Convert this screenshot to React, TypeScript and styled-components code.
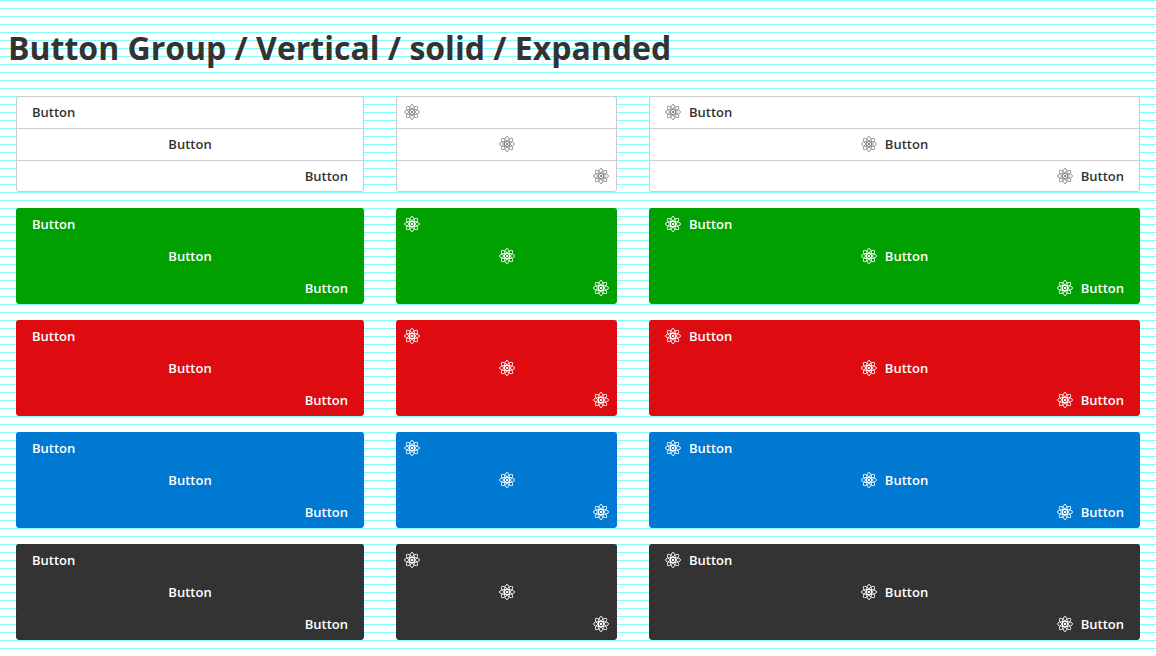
import React from "react";
import styled, { createGlobalStyle } from "styled-components";

const GlobalStyle = createGlobalStyle`
  *, *::before, *::after { box-sizing: border-box; }
  body {
    margin: 0;
    color: #333;
    font-family: "Open Sans", "Noto Sans", sans-serif;
    background: #fff linear-gradient(#80ffff 1px, transparent 1px) 0 0 / 8px 8px;
  }
`;

const Page = styled.main`
  min-height: 100vh;
`;

const Title = styled.h1`
  margin: 0;
  padding: 24px 8px;
  font-size: 32px;
  line-height: 48px;
  font-weight: 700;
`;

const Grid = styled.div`
  display: grid;
  grid-template-columns: 348fr 221fr 491fr;
  gap: 16px 32px;
  padding: 0 16px 16px;
`;

type Tone = "default" | "success" | "danger" | "info" | "dark";
type Align = "flex-start" | "center" | "flex-end";

const fills: Record<Tone, string> = {
  default: "#fff",
  success: "#00a000",
  danger: "#de0b11",
  info: "#0079d3",
  dark: "#333",
};

const borderColor = (tone: Tone) => (tone === "default" ? "#ccc" : fills[tone]);

const Group = styled.div`
  display: flex;
  flex-direction: column;
`;

const GroupButton = styled.button<{ $tone: Tone; $align: Align; $iconOnly: boolean }>`
  display: flex;
  align-items: center;
  justify-content: ${(p) => p.$align};
  gap: 8px;
  height: 32px;
  margin: 0;
  padding: 0 ${(p) => (p.$iconOnly ? 7 : 15)}px;
  border: 1px solid ${(p) => borderColor(p.$tone)};
  background: ${(p) => fills[p.$tone]};
  color: ${(p) => (p.$tone === "default" ? "#333" : "#fff")};
  font-family: inherit;
  font-size: 13px;
  line-height: 16px;
  font-weight: 600;
  cursor: pointer;

  &:not(:last-child) {
    border-bottom: 0;
    padding-bottom: 1px;
  }
  &:first-child { border-radius: 3px 3px 0 0; }
  &:last-child { border-radius: 0 0 3px 3px; }
`;

const Icon = styled.svg<{ $muted: boolean }>`
  width: 16px;
  height: 16px;
  flex: none;
  color: ${(p) => (p.$muted ? "#8c8c8c" : "#fff")};
`;

const Atom = ({ muted }: { muted: boolean }) => (
  <Icon $muted={muted} viewBox="0 0 16 16" fill="none" stroke="currentColor" strokeWidth="0.9" strokeLinejoin="round" aria-hidden="true">
    <ellipse cx="8" cy="8" rx="7.6" ry="2.6" />
    <ellipse cx="8" cy="8" rx="2.6" ry="7.6" />
    <path d="M2.5 2.5C3.2 2.3 4.3 2.3 5 2.6C7.2 3.6 12.4 8.8 13.4 11C13.7 11.7 13.7 12.8 13.5 13.5C12.8 13.7 11.7 13.7 11 13.4C8.8 12.4 3.6 7.2 2.6 5C2.3 4.3 2.3 3.2 2.5 2.5Z" />
    <path d="M13.5 2.5C13.7 3.2 13.7 4.3 13.4 5C12.4 7.2 7.2 12.4 5 13.4C4.3 13.7 3.2 13.7 2.5 13.5C2.3 12.8 2.3 11.7 2.6 11C3.6 8.8 8.8 3.6 11 2.6C11.7 2.3 12.8 2.3 13.5 2.5Z" />
    <circle cx="8" cy="8" r="1.3" fill="currentColor" stroke="none" />
  </Icon>
);

const tones: Tone[] = ["default", "success", "danger", "info", "dark"];
const aligns: Align[] = ["flex-start", "center", "flex-end"];
const contents = [
  { icon: false, label: true },
  { icon: true, label: false },
  { icon: true, label: true },
];

export default function App() {
  return (
    <Page>
      <GlobalStyle />
      <Title>Button Group / Vertical / solid / Expanded</Title>
      <Grid>
        {tones.map((tone) =>
          contents.map(({ icon, label }, column) => (
            <Group key={`${tone}-${column}`} role="group">
              {aligns.map((align) => (
                <GroupButton
                  key={align}
                  type="button"
                  $tone={tone}
                  $align={align}
                  $iconOnly={!label}
                  aria-label={label ? undefined : "Button"}
                >
                  {icon && <Atom muted={tone === "default"} />}
                  {label && "Button"}
                </GroupButton>
              ))}
            </Group>
          ))
        )}
      </Grid>
    </Page>
  );
}
